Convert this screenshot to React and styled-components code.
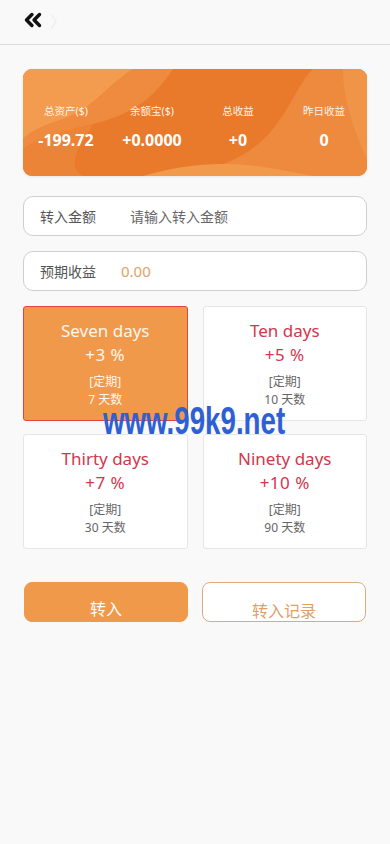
import React, { useState } from "react";
import styled, { createGlobalStyle } from "styled-components";
import { ChevronsLeft } from "lucide-react";

const GlobalStyle = createGlobalStyle`
  html, body {
    margin: 0;
    padding: 0;
    background: #f9f9f9;
    font-family: "Noto Sans", "Noto Sans CJK SC", sans-serif;
  }
  * { box-sizing: border-box; }
`;

const stats = [
  { label: "总资产($)", value: "-199.72" },
  { label: "余额宝($)", value: "+0.0000" },
  { label: "总收益", value: "+0" },
  { label: "昨日收益", value: "0" },
];

const plans = [
  { title: "Seven days", rate: "+3 %", days: "7 天数" },
  { title: "Ten days", rate: "+5 %", days: "10 天数" },
  { title: "Thirty days", rate: "+7 %", days: "30 天数" },
  { title: "Ninety days", rate: "+10 %", days: "90 天数" },
];

// background waves of the balance card
function Waves() {
  return (
    <WaveSvg viewBox="0 0 344 107" preserveAspectRatio="none">
      <rect width="344" height="107" fill="#e9792b" />
      <path d="M0 0 H110 C80 20 70 40 40 50 C20 57 8 62 0 70 Z" fill="#f39c50" />
      <path d="M110 0 H150 C130 30 110 45 70 55 C40 62 15 70 0 80 V70 C8 62 20 57 40 50 C70 40 80 20 110 0 Z" fill="#ee8b3f" />
      <path d="M0 80 C15 70 40 62 70 55 C60 75 40 95 60 107 H0 Z" fill="#ec8437" />
      <path d="M290 0 H344 V107 H150 C200 100 230 85 250 60 C270 35 275 15 290 0 Z" fill="#ee8a3e" />
      <path d="M320 0 H344 V90 C330 60 320 30 320 0 Z" fill="#f09547" />
      <path d="M120 107 C160 95 200 92 240 98 C260 101 275 104 290 107 Z" fill="#f29a4c" />
    </WaveSvg>
  );
}

export default function App() {
  const [picked, setPicked] = useState(0);

  return (
    <Page>
      <GlobalStyle />
      <Header>
        <ChevronsLeft size={26} strokeWidth={3.2} color="#111" />
        <Ghost>〉</Ghost>
      </Header>

      <Body>
        <StatsCard>
          <Waves />
          {stats.map((s) => (
            <Stat key={s.label}>
              <StatLabel>{s.label}</StatLabel>
              <StatValue>{s.value}</StatValue>
            </Stat>
          ))}
        </StatsCard>

        <Field $gap={34}>
          <FieldLabel>转入金额</FieldLabel>
          <FieldInput placeholder="请输入转入金额" />
        </Field>
        <Field $gap={25}>
          <FieldLabel>预期收益</FieldLabel>
          <Expected>0.00</Expected>
        </Field>

        <PlanGrid>
          {plans.map((p, i) => (
            <Plan key={p.title} $active={picked === i} onClick={() => setPicked(i)}>
              <PlanTitle $active={picked === i}>{p.title}</PlanTitle>
              <PlanRate $active={picked === i}>{p.rate}</PlanRate>
              <PlanNote $active={picked === i}>
                [定期]
                <br />
                {p.days}
              </PlanNote>
            </Plan>
          ))}
        </PlanGrid>

        <Actions>
          <ActionBtn $primary>转入</ActionBtn>
          <ActionBtn>转入记录</ActionBtn>
        </Actions>
      </Body>

      <Watermark>www.99k9.net</Watermark>
    </Page>
  );
}

const Page = styled.div`
  position: relative;
  min-height: 844px;
  background: #f9f9f9;
`;

const Header = styled.div`
  height: 45px;
  display: flex;
  align-items: center;
  gap: 4px;
  padding: 0 0 4px 20px;
  border-bottom: 1px solid #dcdcdc;
`;

const Ghost = styled.span`
  color: #ededed;
  font-size: 16px;
`;

const Body = styled.div`
  padding: 24px 23px 0;
  display: flex;
  flex-direction: column;
`;

const StatsCard = styled.div`
  position: relative;
  overflow: hidden;
  height: 107px;
  border-radius: 9px;
  display: grid;
  grid-template-columns: repeat(4, 1fr);
  align-items: center;
  padding-top: 8px;
  box-shadow: 0 1px 3px rgba(0, 0, 0, 0.08);
`;

const WaveSvg = styled.svg`
  position: absolute;
  inset: 0;
  width: 100%;
  height: 100%;
`;

const Stat = styled.div`
  position: relative;
  display: flex;
  flex-direction: column;
  align-items: center;
  gap: 12px;
  color: #fff;
`;

const StatLabel = styled.div`
  font-size: 10.5px;
  line-height: 14px;
  color: #fff3e6;
`;

const StatValue = styled.div`
  font-size: 16px;
  line-height: 20px;
  font-weight: 700;
`;

const Field = styled.div`
  height: 40px;
  margin-top: 20px;
  & + & {
    margin-top: 15px;
  }
  display: flex;
  align-items: center;
  gap: ${(p) => p.$gap}px;
  padding-left: 16px;
  background: #fff;
  border: 1px solid #cfcfcf;
  border-radius: 10px;
`;

const FieldLabel = styled.span`
  font-size: 14px;
  color: #555;
  font-family: "Noto Sans CJK SC", sans-serif;
`;

const FieldInput = styled.input`
  border: none;
  outline: none;
  flex: 1;
  background: transparent;
  font-size: 14px;
  font-family: "Noto Sans CJK SC", sans-serif;
  padding: 0;
  &::placeholder {
    color: #666;
  }
`;

const Expected = styled.span`
  font-size: 15px;
  color: #e0a268;
`;

const PlanGrid = styled.div`
  margin-top: 15px;
  display: grid;
  grid-template-columns: 1fr 1fr;
  column-gap: 15px;
  row-gap: 13px;
`;

const Plan = styled.div`
  height: 115px;
  padding-top: 12px;
  display: flex;
  flex-direction: column;
  align-items: center;
  border-radius: 3px;
  cursor: pointer;
  background: ${(p) => (p.$active ? "#f0994b" : "#fff")};
  border: 1px solid ${(p) => (p.$active ? "#e0453c" : "#e6e6e6")};
`;

const PlanTitle = styled.div`
  font-size: 17px;
  line-height: 24px;
  color: ${(p) => (p.$active ? "#fff6ee" : "#d3364c")};
`;

const PlanRate = styled.div`
  font-size: 17px;
  line-height: 24px;
  letter-spacing: 0.5px;
  color: ${(p) => (p.$active ? "#fff6ee" : "#d3364c")};
`;

const PlanNote = styled.div`
  margin-top: 6px;
  font-size: 12px;
  line-height: 18px;
  text-align: center;
  font-family: "Noto Sans", "Noto Sans CJK SC", sans-serif;
  color: ${(p) => (p.$active ? "#fff6ee" : "#666")};
`;

const Actions = styled.div`
  margin-top: 33px;
  display: grid;
  grid-template-columns: 1fr 1fr;
  gap: 14px;
  padding: 0 1px;
`;

const ActionBtn = styled.button`
  height: 40px;
  display: flex;
  align-items: flex-end;
  justify-content: center;
  padding: 0 0 ${(p) => (p.$primary ? "2px" : "0")};
  font-size: 16px;
  line-height: 22px;
  font-family: "Noto Sans CJK SC", sans-serif;
  border-radius: 8px;
  border: 1px solid ${(p) => (p.$primary ? "#f0994b" : "#dbab80")};
  background: ${(p) => (p.$primary ? "#f0994b" : "#fff")};
  color: ${(p) => (p.$primary ? "#fff" : "#dda06a")};
`;

const Watermark = styled.div`
  position: absolute;
  left: 103px;
  top: 399px;
  font-family: "Liberation Sans", sans-serif;
  font-weight: 700;
  font-size: 39px;
  line-height: 44px;
  color: #2f5fd4;
  transform: scaleX(0.71);
  transform-origin: left center;
  white-space: nowrap;
  pointer-events: none;
`;
